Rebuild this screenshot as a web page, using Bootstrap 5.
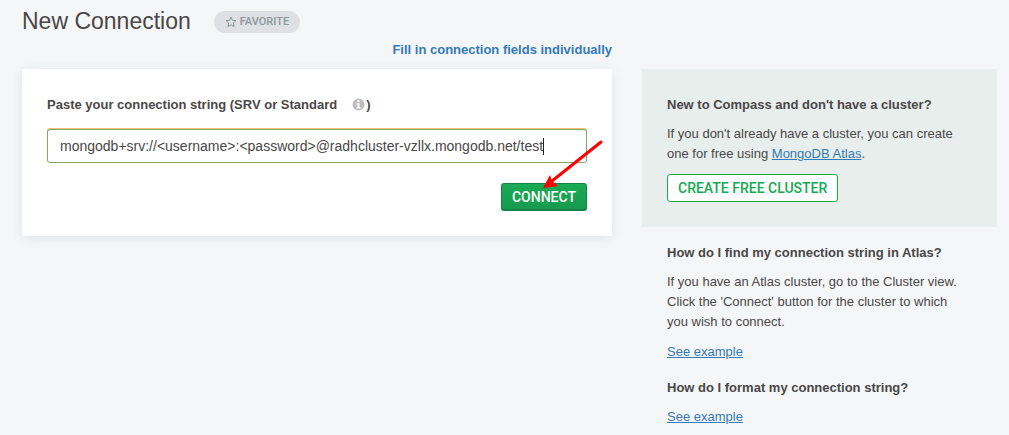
<!DOCTYPE html>
<html lang="en">
<head>
<meta charset="utf-8">
<meta name="viewport" content="width=device-width, initial-scale=1">
<title>New Connection</title>
<link href="https://cdn.jsdelivr.net/npm/bootstrap@5.3.0/dist/css/bootstrap.min.css" rel="stylesheet">
<style>
body { background: #f5f6f8; color: #494747; font-family: "Liberation Sans", Arial, sans-serif; font-size: 13px; line-height: 20px; }
a { color: #337ab7; }
.page { padding: 6px 12px 8px 22px; }
.page-title { font-size: 23px; line-height: 30px; font-weight: 400; }
.caps { font-family: Roboto, sans-serif; font-size: 14px; line-height: 24px; font-weight: 500; }
.favorite { background: #dee0e3; color: #89979b; font-size: 11px; line-height: 22px; border-radius: 11px; padding: 0 11px; gap: 3px; margin: 2px 0 0 23px; }
.columns { gap: 30px; }
.main-col { min-width: 0; }
.switch-row { height: 33px; padding-top: 4px; }
.panel { background: #fff; padding: 26px 25px 25px; box-shadow: 0 2px 12px rgba(0,0,0,.08); }
.heading { font-size: 13px; line-height: 20px; font-weight: 700; }
.info-icon { margin: 0 1px 2px 15px; }
.input-wrap { margin: 14px 0 20px; }
.conn-input, .conn-input:focus { height: 34px; border: 1px solid #87a56b; border-radius: 3px; padding: 0 12px; color: #494747; font-size: 14px; box-shadow: 0 -1px #f0c468; }
.caret-line { left: 496px; top: 9px; width: 1px; height: 17px; background: #222; }
.btn-connect { height: 28px; padding: 0 10px; border: 1px solid #13824a; border-bottom-width: 2px; border-radius: 3px; background: linear-gradient(#18ab55, #179a4d); color: #fff; }
.pointer-arrow { right: 9px; top: 70px; pointer-events: none; }
.side-col { width: 355px; }
.promo { background: #e7eeec; padding: 26px 25px 25px; }
.btn-create { height: 28px; padding: 0 10px; border: 1px solid #13aa52; border-radius: 3px; background: #fff; color: #13aa52; }
.help { padding: 16px 35px 0 25px; }
.gap-line { margin-bottom: 9px; }
.gap-para { margin-bottom: 10px; }
.gap-block { margin-bottom: 16px; }
</style>
</head>
<body>
<div class="page">
  <header class="d-flex align-items-center">
    <h1 class="page-title mb-0">New Connection</h1>
    <button type="button" class="caps favorite btn d-inline-flex align-items-center border-0">
      <svg width="12" height="12" viewBox="0 0 12 12" fill="none" stroke="#89979b" stroke-linejoin="round" aria-hidden="true"><path d="M6 1.1 7.4 4.3 11 4.7 8.3 7 9.1 10.6 6 8.7 2.9 10.6 3.7 7 1 4.7 4.6 4.3Z"/></svg>
      FAVORITE
    </button>
  </header>
  <div class="columns d-flex align-items-start">
    <main class="main-col flex-fill">
      <div class="switch-row text-end"><a href="#" class="heading text-decoration-none">Fill in connection fields individually</a></div>
      <form class="panel position-relative">
        <label for="conn" class="heading d-flex align-items-center">Paste your connection string (SRV or Standard
          <svg class="info-icon" width="13" height="13" viewBox="0 0 13 13" aria-hidden="true"><circle cx="6.5" cy="6.5" r="6" fill="#bdbdbd"/><path d="M5.4 2.3h2.1v1.8H5.4zM4.5 5.2h3v4h1v1.3h-4V9.2h1V6.5h-1z" fill="#fff"/></svg>)
        </label>
        <div class="input-wrap position-relative">
          <input id="conn" type="text" class="conn-input form-control" value="mongodb+srv://&lt;username&gt;:&lt;password&gt;@radhcluster-vzllx.mongodb.net/test">
          <span class="caret-line position-absolute"></span>
        </div>
        <div class="d-flex justify-content-end"><button type="button" class="caps btn btn-connect">CONNECT</button></div>
        <svg class="pointer-arrow position-absolute" width="62" height="52" viewBox="0 0 62 52" aria-hidden="true"><path d="M60 3 11 42" stroke="red" stroke-width="3" stroke-linecap="round"/><path d="M2 49 9 36 11 42 17 47Z" fill="red"/></svg>
      </form>
    </main>
    <aside class="side-col flex-shrink-0">
      <div class="switch-row"></div>
      <section class="promo">
        <h2 class="heading gap-line">New to Compass and don't have a cluster?</h2>
        <p class="gap-para">If you don't already have a cluster, you can create one for free using <a href="#">MongoDB Atlas</a>.</p>
        <button type="button" class="caps btn btn-create d-block">CREATE FREE CLUSTER</button>
      </section>
      <section class="help">
        <h2 class="heading gap-line">How do I find my connection string in Atlas?</h2>
        <p class="gap-para">If you have an Atlas cluster, go to the Cluster view. Click the 'Connect' button for the cluster to which you wish to connect.</p>
        <p class="gap-block"><a href="#">See example</a></p>
        <h2 class="heading gap-line">How do I format my connection string?</h2>
        <p class="mb-0"><a href="#">See example</a></p>
      </section>
    </aside>
  </div>
</div>
<script src="https://cdn.jsdelivr.net/npm/bootstrap@5.3.0/dist/js/bootstrap.bundle.min.js"></script>
</body>
</html>
